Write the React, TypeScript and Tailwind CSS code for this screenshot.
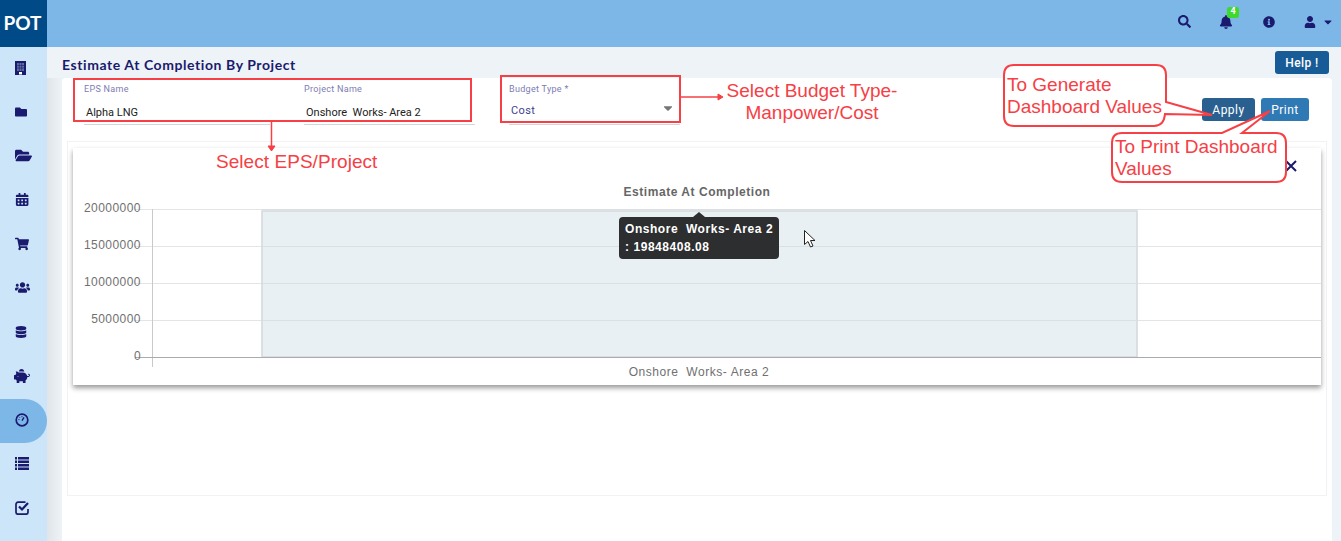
import React from 'react';
import {
  FaBell,
  FaCalendarAlt,
  FaCaretDown,
  FaDatabase,
  FaFolder,
  FaFolderOpen,
  FaInfoCircle,
  FaPiggyBank,
  FaSearch,
  FaShoppingCart,
  FaUser,
  FaUsers,
} from 'react-icons/fa';

const BuildingIcon = () => (
  <svg width="11" height="14" viewBox="0 0 11 14">
    <rect width="11" height="14" fill="#1a1a6e" />
    <path d="M2 2h7v8H2z" fill="#5f6fa0" />
    <path d="M2 4.500h7M2 7h7M4.300 2v8M6.700 2v8" stroke="#1a1a6e" strokeWidth="0.6" />
    <rect x="4" y="11" width="3" height="2.500" fill="#ffffff" />
  </svg>
);

const GaugeIcon = () => (
  <svg width="14" height="14" viewBox="0 0 14 14" fill="none" stroke="currentColor">
    <circle cx="7" cy="7" r="5.800" strokeWidth="1.700" />
    <path d="M7 7.600 9 4.400" strokeWidth="1.400" />
    <path d="M3.400 6.600h1M7 3.200v1M4.400 4.200l.6.6" strokeWidth="1" />
  </svg>
);

const ListIcon = () => (
  <svg width="14" height="13" viewBox="0 0 14 13" fill="currentColor">
    <path d="M0 0h2v2.500H0zM3 0h11v2.500H3zM0 3.500h2V6H0zM3 3.500h11V6H3zM0 7h2v2.500H0zM3 7h11v2.500H3zM0 10.500h2V13H0zM3 10.500h11V13H3z" />
  </svg>
);

const CheckIcon = () => (
  <svg width="15" height="14" viewBox="0 0 15 14" fill="none" stroke="currentColor">
    <path d="M10.500 1.200H3a2 2 0 0 0-2 2v8a2 2 0 0 0 2 2h8a2 2 0 0 0 2-2V8" strokeWidth="1.700" />
    <path d="M4 5.500l3 3 6-6.500" strokeWidth="2.200" />
  </svg>
);

const sideItems = [
  <BuildingIcon />,
  <FaFolder size={12} />,
  <FaFolderOpen size={17} />,
  <FaCalendarAlt size={13} className="scale-x-110 origin-left" />,
  <FaShoppingCart size={14} />,
  <FaUsers size={15} />,
  <FaDatabase size={12} />,
  <FaPiggyBank size={16} className="-scale-x-100 -ml-px" />,
  <GaugeIcon />,
  <ListIcon />,
  <CheckIcon />,
];

const ticks = [
  { y: 61, label: '20000000' },
  { y: 98, label: '15000000' },
  { y: 135, label: '10000000' },
  { y: 172, label: '5000000' },
  { y: 209, label: '0' },
];

function Field({ label, value, width, tone }: { label: string; value: string; width: string; tone: string }) {
  return (
    <div className={`${width} h-[43px] border-b border-[#d4d6d8] font-['Roboto',sans-serif]`}>
      <div className="h-[17px] pt-[1px] text-[9px] leading-[12px] tracking-[0.3px] text-[#7c7cb4]">{label}</div>
      <div className={`pl-[2px] leading-[14px] ${tone}`}>{value}</div>
    </div>
  );
}

function EstimateChart() {
  return (
    <svg width="1248" height="237" className="block font-['Liberation_Sans',sans-serif]">
      <text x="624" y="48" textAnchor="middle" fontSize="12" fontWeight="700" letterSpacing="0.55" fill="#666666">
        Estimate At Completion
      </text>
      {ticks.slice(0, 4).map((t) => (
        <line key={t.y} x1="62" x2="1248" y1={t.y + 0.5} y2={t.y + 0.5} stroke="#e2e4e5" />
      ))}
      <rect x="189" y="63" width="875" height="146" fill="#e9f0f4" stroke="#d4d8da" strokeWidth="1.5" />
      {ticks.slice(0, 4).map((t) => (
        <line key={t.y} x1="189" x2="1064" y1={t.y + 0.5} y2={t.y + 0.5} stroke="#d9dfe2" />
      ))}
      <line x1="79.5" x2="79.5" y1="61" y2="219" stroke="#c8c9ca" />
      <line x1="62" x2="1248" y1="209.5" y2="209.5" stroke="#a9acae" />
      {ticks.map((t) => (
        <text key={t.label} x="68" y={t.y + 3} textAnchor="end" fontSize="12" letterSpacing="0.45" fill="#707070">
          {t.label}
        </text>
      ))}
      <text x="626" y="228" textAnchor="middle" fontSize="12" letterSpacing="0.55" fill="#707070" className="whitespace-pre">
        Onshore  Works- Area 2
      </text>
    </svg>
  );
}

function Annotations() {
  return (
    <>
      <svg width="1341" height="541" fill="none" stroke="#f64045" className="absolute left-0 top-0 pointer-events-none">
        <rect x="74" y="79" width="397" height="42" strokeWidth="2" />
        <rect x="501" y="76" width="179" height="46" strokeWidth="2" />
        <path d="M271.500 121v25" strokeWidth="1.500" />
        <path d="M268 146h7l-3.500 5z" fill="#f64045" strokeWidth="1" />
        <path d="M680 97h38" strokeWidth="1.500" />
        <path d="M718 94v6l5-3z" fill="#f64045" strokeWidth="1" />
        <path
          d="M1014 65h142q10 0 10 10v27l46 13-47-1q-1 12-11 12H1014q-10 0-10-10V75q0-10 10-10z"
          fill="#ffffff"
          strokeWidth="2"
        />
        <path
          d="M1122 133h100l48-22-28 22h34q10 0 10 10v29q0 10-10 10h-154q-10 0-10-10v-29q0-10 10-10z"
          fill="#ffffff"
          strokeWidth="2"
        />
      </svg>
      <div className="absolute inset-0 pointer-events-none font-['Liberation_Sans',sans-serif] text-[19px] leading-[22px] text-[#f64045]">
        <div className="absolute left-[216px] top-[151px] tracking-[0.05px]">Select EPS/Project</div>
        <div className="absolute left-[722px] top-[80px] w-[180px] text-center">Select Budget Type- Manpower/Cost</div>
        <div className="absolute left-[1007px] top-[74px]">
          To Generate
          <br />
          Dashboard Values
        </div>
        <div className="absolute left-[1115px] top-[136px]">
          To Print Dashboard
          <br />
          Values
        </div>
      </div>
    </>
  );
}

export default function App() {
  return (
    <div className="relative h-[541px] w-[1341px] overflow-hidden bg-white">
      {/* Top bar */}
      <header className="flex h-[47px] items-center bg-[#7cb7e8] text-[#1a1a6e]">
        <div className="flex h-full w-[47px] items-center justify-center bg-[#004b87] pr-[2px] font-['Lato',sans-serif] text-[19px] font-bold text-white">
          POT
        </div>
        <div className="ml-auto flex items-center pb-[4px] pr-[7px]">
          <FaSearch size={13} className="mr-[28px]" />
          <div className="relative mr-[30px]">
            <FaBell size={14} />
            <span className="absolute left-[8px] top-[-8px] flex h-[11px] w-[12px] items-center justify-center rounded-[2px] bg-[#3fd92e] font-['Roboto',sans-serif] text-[9px] font-bold text-white">
              4
            </span>
          </div>
          <FaInfoCircle size={12} className="mr-[29px]" />
          <FaUser size={12} className="mr-[6px]" />
          <FaCaretDown size={12} />
        </div>
      </header>

      <div className="flex h-[494px]">
        {/* Side menu */}
        <aside className="w-[47px] shrink-0 bg-[#cce5f9] text-[#1a1a6e]">
          {sideItems.map((icon, i) => (
            <div
              key={i}
              className={`flex h-[44px] items-center pb-[3px] pl-[15px] ${i === 8 ? 'rounded-r-[22px] bg-[#7cb7e8]' : ''}`}
            >
              {icon}
            </div>
          ))}
        </aside>

        <main className="flex min-w-0 flex-1 flex-col bg-[#eef3f7]">
          <div className="flex h-[31px] shrink-0 items-start justify-between pl-[15px] pr-[12px]">
            <h1 className="pt-[9px] font-['Lato',sans-serif] text-[14px] font-bold leading-[18px] tracking-[0.57px] text-[#1a1a6e]">
              Estimate At Completion By Project
            </h1>
            <button className="mt-[4px] h-[23px] w-[54px] rounded-[3px] bg-[#175c96] font-['Roboto',sans-serif] text-[12px] font-medium tracking-[0.4px] text-white">
              Help !
            </button>
          </div>

          <div className="flex min-h-0 flex-1">
            <div className="w-[15px] shrink-0 bg-gradient-to-r from-[#dfe5e9] to-[#eef3f7]" />
            <section className="mr-[9px] flex-1 rounded-t-[4px] bg-white px-[5px]">
              <div className="flex h-[63px] items-start pl-[17px] pr-[18px]">
                <div className="mt-[4px] flex">
                  <Field label="EPS Name" value="Alpha LNG" width="w-[186px] mr-[34px]" tone="pt-[7px] text-[11px] text-[#222222]" />
                  <Field
                    label="Project Name"
                    value="Onshore  Works- Area 2"
                    width="w-[171px] mr-[34px] whitespace-pre"
                    tone="pt-[7px] text-[11px] text-[#222222]"
                  />
                  <div className="relative">
                    <Field label="Budget Type *" value="Cost" width="w-[171px]" tone="pt-[5px] text-[11px] tracking-[0.4px] text-[#3f3f8f]" />
                    <FaCaretDown size={14} className="absolute right-[5px] top-[19px] text-[#757575]" />
                  </div>
                </div>
                <div className="ml-auto mt-[20px] flex gap-[6px] font-['Roboto',sans-serif] text-[12px] tracking-[0.5px] text-white">
                  <button className="h-[23px] w-[53px] rounded-[3px] bg-[#2a6090]">Apply</button>
                  <button className="h-[23px] w-[48px] rounded-[3px] bg-[#2f7ab5]">Print</button>
                </div>
              </div>

              <div className="h-[355px] border border-[#f1f2f3] px-[5px] pt-[6px]">
                <div className="relative h-[237px] bg-white shadow-[0_3px_5px_rgba(0,0,0,0.4)]">
                  <EstimateChart />
                  <svg width="14" height="14" viewBox="0 0 14 14" className="absolute left-[1211px] top-[11px]" stroke="#1a1a6e" strokeWidth="2">
                    <path d="M2 2l10 10M12 2L2 12" />
                  </svg>
                  <div className="absolute left-[546px] top-[69px] h-[42px] w-[160px] rounded-[4px] bg-[#2d2e30] px-[6px] pt-[3px] font-['Liberation_Sans',sans-serif] text-[12px] font-bold leading-[18px] tracking-[0.55px] whitespace-pre text-white">
                    <span className="absolute left-[74px] top-[-5px] h-0 w-0 border-x-[6px] border-b-[5px] border-x-transparent border-b-[#2d2e30]" />
                    Onshore  Works- Area 2
                    <br />: 19848408.08
                  </div>
                  <svg width="16" height="20" viewBox="0 0 16 20" className="absolute left-[730px] top-[81px]">
                    <path d="M1.500 1.500v14l3.500-3 2.500 5.500 2.500-1-2.500-5.500h4.500z" fill="#ffffff" stroke="#222222" />
                  </svg>
                </div>
              </div>
            </section>
          </div>
        </main>
      </div>

      <Annotations />
    </div>
  );
}
